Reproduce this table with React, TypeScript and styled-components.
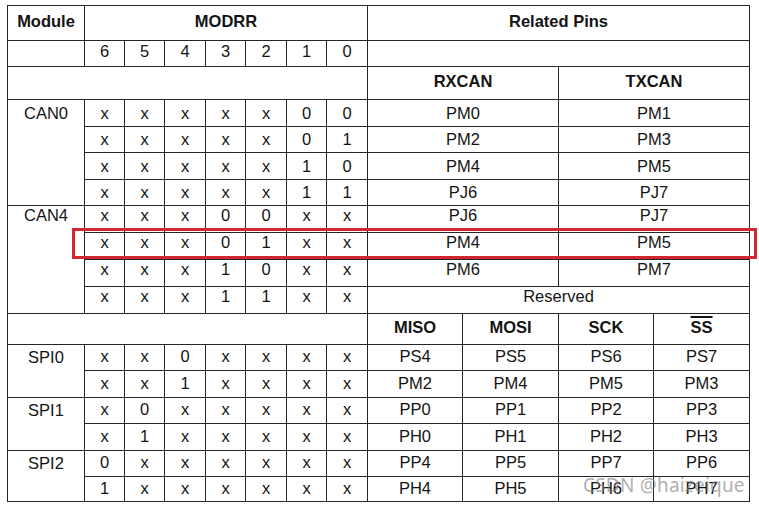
import React from "react";
import styled, { createGlobalStyle, css } from "styled-components";

const Global = createGlobalStyle`
  html, body { margin: 0; padding: 0; background: #ffffff; }
  body { font-family: "Liberation Sans", Arial, sans-serif; color: #111; }
`;

const Page = styled.div`
  position: relative;
  width: 759px;
  height: 507px;
  padding: 5px 0 0 7px;
  box-sizing: border-box;
  overflow: hidden;
`;

const Table = styled.table`
  border-collapse: collapse;
  table-layout: fixed;
  width: 742px;
  border: 1.5px solid #222;
  font-size: 16.5px;
`;

const Row = styled.tr<{ $h: number }>`
  height: ${(p) => p.$h}px;
`;

const Cell = styled.td<{ $bold?: boolean; $top?: number; $lift?: number }>`
  border: 1px solid #262626;
  padding: 0 0 ${(p) => (p.$lift ?? 1) * 2}px 0;
  text-align: center;
  vertical-align: middle;
  line-height: 18px;
  white-space: nowrap;
  color: #141414;
  ${(p) =>
    p.$bold &&
    css`
      font-weight: bold;
    `}
  ${(p) =>
    p.$top !== undefined &&
    css`
      vertical-align: top;
      padding-top: ${p.$top}px;
      padding-bottom: 0;
    `}
`;

const Over = styled.span`
  text-decoration: overline;
  text-decoration-thickness: 1.5px;
`;

const Highlight = styled.div`
  position: absolute;
  left: 72px;
  top: 228px;
  width: 685px;
  height: 31px;
  border: 3px solid #d3262e;
  box-sizing: border-box;
  pointer-events: none;
`;

const Watermark = styled.div`
  position: absolute;
  left: 583px;
  top: 472px;
  font-family: "Noto Sans", "DejaVu Sans", sans-serif;
  font-size: 19px;
  color: rgba(130, 130, 130, 0.65);
  letter-spacing: 0.2px;
  pointer-events: none;
`;

const colWidths = [77, 40, 40, 41, 40, 41, 40, 41, 95, 96, 95, 96];

type CanGroup = {
  name: string;
  labelTop: number;
  lift: number;
  rows: { bits: string[]; rx?: string; tx?: string; reserved?: boolean }[];
};
type SpiGroup = { name: string; rows: { bits: string[]; pins: string[] }[] };

const canGroups: CanGroup[] = [
  {
    name: "CAN0",
    labelTop: 4,
    lift: 0.5,
    rows: [
      { bits: ["x", "x", "x", "x", "x", "0", "0"], rx: "PM0", tx: "PM1" },
      { bits: ["x", "x", "x", "x", "x", "0", "1"], rx: "PM2", tx: "PM3" },
      { bits: ["x", "x", "x", "x", "x", "1", "0"], rx: "PM4", tx: "PM5" },
      { bits: ["x", "x", "x", "x", "x", "1", "1"], rx: "PJ6", tx: "PJ7" },
    ],
  },
  {
    name: "CAN4",
    labelTop: 0,
    lift: 4,
    rows: [
      { bits: ["x", "x", "x", "0", "0", "x", "x"], rx: "PJ6", tx: "PJ7" },
      { bits: ["x", "x", "x", "0", "1", "x", "x"], rx: "PM4", tx: "PM5" },
      { bits: ["x", "x", "x", "1", "0", "x", "x"], rx: "PM6", tx: "PM7" },
      { bits: ["x", "x", "x", "1", "1", "x", "x"], reserved: true },
    ],
  },
];

const spiGroups: SpiGroup[] = [
  {
    name: "SPI0",
    rows: [
      { bits: ["x", "x", "0", "x", "x", "x", "x"], pins: ["PS4", "PS5", "PS6", "PS7"] },
      { bits: ["x", "x", "1", "x", "x", "x", "x"], pins: ["PM2", "PM4", "PM5", "PM3"] },
    ],
  },
  {
    name: "SPI1",
    rows: [
      { bits: ["x", "0", "x", "x", "x", "x", "x"], pins: ["PP0", "PP1", "PP2", "PP3"] },
      { bits: ["x", "1", "x", "x", "x", "x", "x"], pins: ["PH0", "PH1", "PH2", "PH3"] },
    ],
  },
  {
    name: "SPI2",
    rows: [
      { bits: ["0", "x", "x", "x", "x", "x", "x"], pins: ["PP4", "PP5", "PP7", "PP6"] },
      { bits: ["1", "x", "x", "x", "x", "x", "x"], pins: ["PH4", "PH5", "PH6", "PH7"] },
    ],
  },
];

const canHeights = [27, 26, 27, 26, 27, 26, 27, 26];
const spiHeights = [26, 27, 26, 27, 26, 25];

export default function App() {
  let ci = 0;
  let si = 0;
  return (
    <>
      <Global />
      <Page>
        <Table>
          <colgroup>
            {colWidths.map((w, i) => (
              <col key={i} style={{ width: w }} />
            ))}
          </colgroup>
          <tbody>
            <Row $h={35}>
              <Cell $bold $lift={2.5}>Module</Cell>
              <Cell $bold $lift={2.5} colSpan={7}>MODRR</Cell>
              <Cell $bold $lift={2.5} colSpan={4}>Related Pins</Cell>
            </Row>
            <Row $h={26}>
              <Cell />
              {["6", "5", "4", "3", "2", "1", "0"].map((b) => (
                <Cell key={b} $lift={2.5}>{b}</Cell>
              ))}
              <Cell colSpan={4} />
            </Row>
            <Row $h={33}>
              <Cell colSpan={8} />
              <Cell $bold $lift={2.5} colSpan={2}>RXCAN</Cell>
              <Cell $bold $lift={2.5} colSpan={2}>TXCAN</Cell>
            </Row>
            {canGroups.map((g) =>
              g.rows.map((r, i) => (
                <Row key={g.name + i} $h={canHeights[ci++]}>
                  {i === 0 && (
                    <Cell $top={g.labelTop} rowSpan={g.rows.length}>
                      {g.name}
                    </Cell>
                  )}
                  {r.bits.map((b, j) => (
                    <Cell key={j} $lift={g.lift}>{b}</Cell>
                  ))}
                  {r.reserved ? (
                    <Cell colSpan={4} $lift={g.lift}>Reserved</Cell>
                  ) : (
                    <>
                      <Cell colSpan={2} $lift={g.lift}>{r.rx}</Cell>
                      <Cell colSpan={2} $lift={g.lift}>{r.tx}</Cell>
                    </>
                  )}
                </Row>
              ))
            )}
            <Row $h={31}>
              <Cell colSpan={8} />
              <Cell $bold $lift={2.5}>MISO</Cell>
              <Cell $bold $lift={2.5}>MOSI</Cell>
              <Cell $bold $lift={2.5}>SCK</Cell>
              <Cell $bold $lift={2.5}>
                <Over>SS</Over>
              </Cell>
            </Row>
            {spiGroups.map((g) =>
              g.rows.map((r, i) => (
                <Row key={g.name + i} $h={spiHeights[si++]}>
                  {i === 0 && (
                    <Cell $top={3} rowSpan={g.rows.length}>
                      {g.name}
                    </Cell>
                  )}
                  {r.bits.map((b, j) => (
                    <Cell key={j} $lift={1.5}>{b}</Cell>
                  ))}
                  {r.pins.map((p, j) => (
                    <Cell key={"p" + j} $lift={1.5}>{p}</Cell>
                  ))}
                </Row>
              ))
            )}
          </tbody>
        </Table>
        <Highlight />
        <Watermark>CSDN @haizeique</Watermark>
      </Page>
    </>
  );
}
